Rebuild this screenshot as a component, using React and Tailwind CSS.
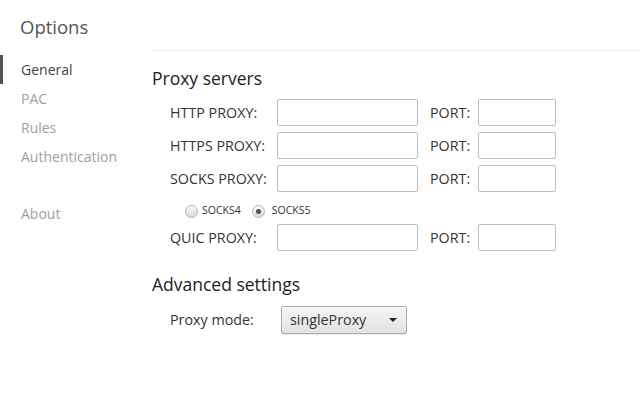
import React from 'react';

const navItems = ['General', 'PAC', 'Rules', 'Authentication'];

const proxies = [
  { label: 'HTTP PROXY:' },
  { label: 'HTTPS PROXY:' },
  { label: 'SOCKS PROXY:', socks: true },
  { label: 'QUIC PROXY:' },
];

function Radio({ checked }) {
  return (
    <span className="flex h-[13px] w-[13px] items-center justify-center rounded-full border border-[#b4b4b4] bg-gradient-to-b from-[#fcfcfc] to-[#d8d8d8]">
      {checked && <span className="h-[5px] w-[5px] rounded-full bg-[#555]" />}
    </span>
  );
}

function ProxyRow({ label }) {
  return (
    <div className="flex h-[27px] items-center">
      <span className="w-[107px] text-[14.3px] text-[#333]">{label}</span>
      <input className="h-[27px] w-[141px] rounded-[2px] border border-[#bdbdbd] bg-white px-1 outline-none" />
      <span className="ml-[12px] w-[48px] text-[14.3px] text-[#333]">PORT:</span>
      <input className="h-[27px] w-[78px] rounded-[2px] border border-[#bdbdbd] bg-white px-1 outline-none" />
    </div>
  );
}

export default function App() {
  return (
    <div className="flex min-h-[400px] w-[640px] bg-white font-['Open_Sans',sans-serif]">
      {/* Sidebar */}
      <aside className="w-[152px] shrink-0">
        <h1 className="pl-5 pt-[14px] text-[18.5px] leading-[26px] text-[#555]">Options</h1>
        <nav className="mt-[15px]">
          {navItems.map((item, i) => (
            <div
              key={item}
              className={
                i === 0
                  ? 'flex h-[29px] items-center border-l-[3px] border-[#4e535a] pl-[18px] text-[14px] text-[#444]'
                  : 'flex h-[29px] items-center pl-[21px] text-[14px] text-[#a0a0a0]'
              }
            >
              {item}
            </div>
          ))}
          <div className="mt-[28px] flex h-[29px] items-center pl-[21px] text-[14px] text-[#a0a0a0]">About</div>
        </nav>
      </aside>

      {/* Main */}
      <main className="flex-1">
        <div className="mt-[50px] border-t border-[#ececec]">
          <h2 className="mt-[15px] text-[17.5px] leading-[24px] text-[#222]">Proxy servers</h2>
          <div className="mt-[9px] flex flex-col gap-[6px] pl-[18px]">
            {proxies.map((p) => (
              <React.Fragment key={p.label}>
                <ProxyRow label={p.label} />
                {p.socks && (
                  <div className="mt-[3px] mb-[-3px] flex h-[20px] items-center pl-[15px] text-[10.5px] text-[#333]">
                    <Radio />
                    <span className="ml-[4px]">SOCKS4</span>
                    <span className="ml-[11px]"><Radio checked /></span>
                    <span className="ml-[7px]">SOCKS5</span>
                  </div>
                )}
              </React.Fragment>
            ))}
          </div>

          <h2 className="mt-[21px] text-[17.5px] leading-[24px] text-[#222]">Advanced settings</h2>
          <div className="mt-[10px] flex items-center pl-[18px]">
            <span className="w-[111px] text-[14.3px] text-[#333]">Proxy mode:</span>
            <div className="flex h-[28px] w-[126px] items-center justify-between rounded-[2px] border border-[#aaa] bg-gradient-to-b from-[#f6f6f6] to-[#e2e2e2] pl-[8px] pr-[9px] text-[14.3px] text-[#333] shadow-[0_1px_1px_rgba(0,0,0,0.08)]">
              <span>singleProxy</span>
              <svg width="8" height="4" viewBox="0 0 8 4">
                <path d="M0 0 L8 0 L4 4 Z" fill="#222" />
              </svg>
            </div>
          </div>
        </div>
      </main>
    </div>
  );
}
